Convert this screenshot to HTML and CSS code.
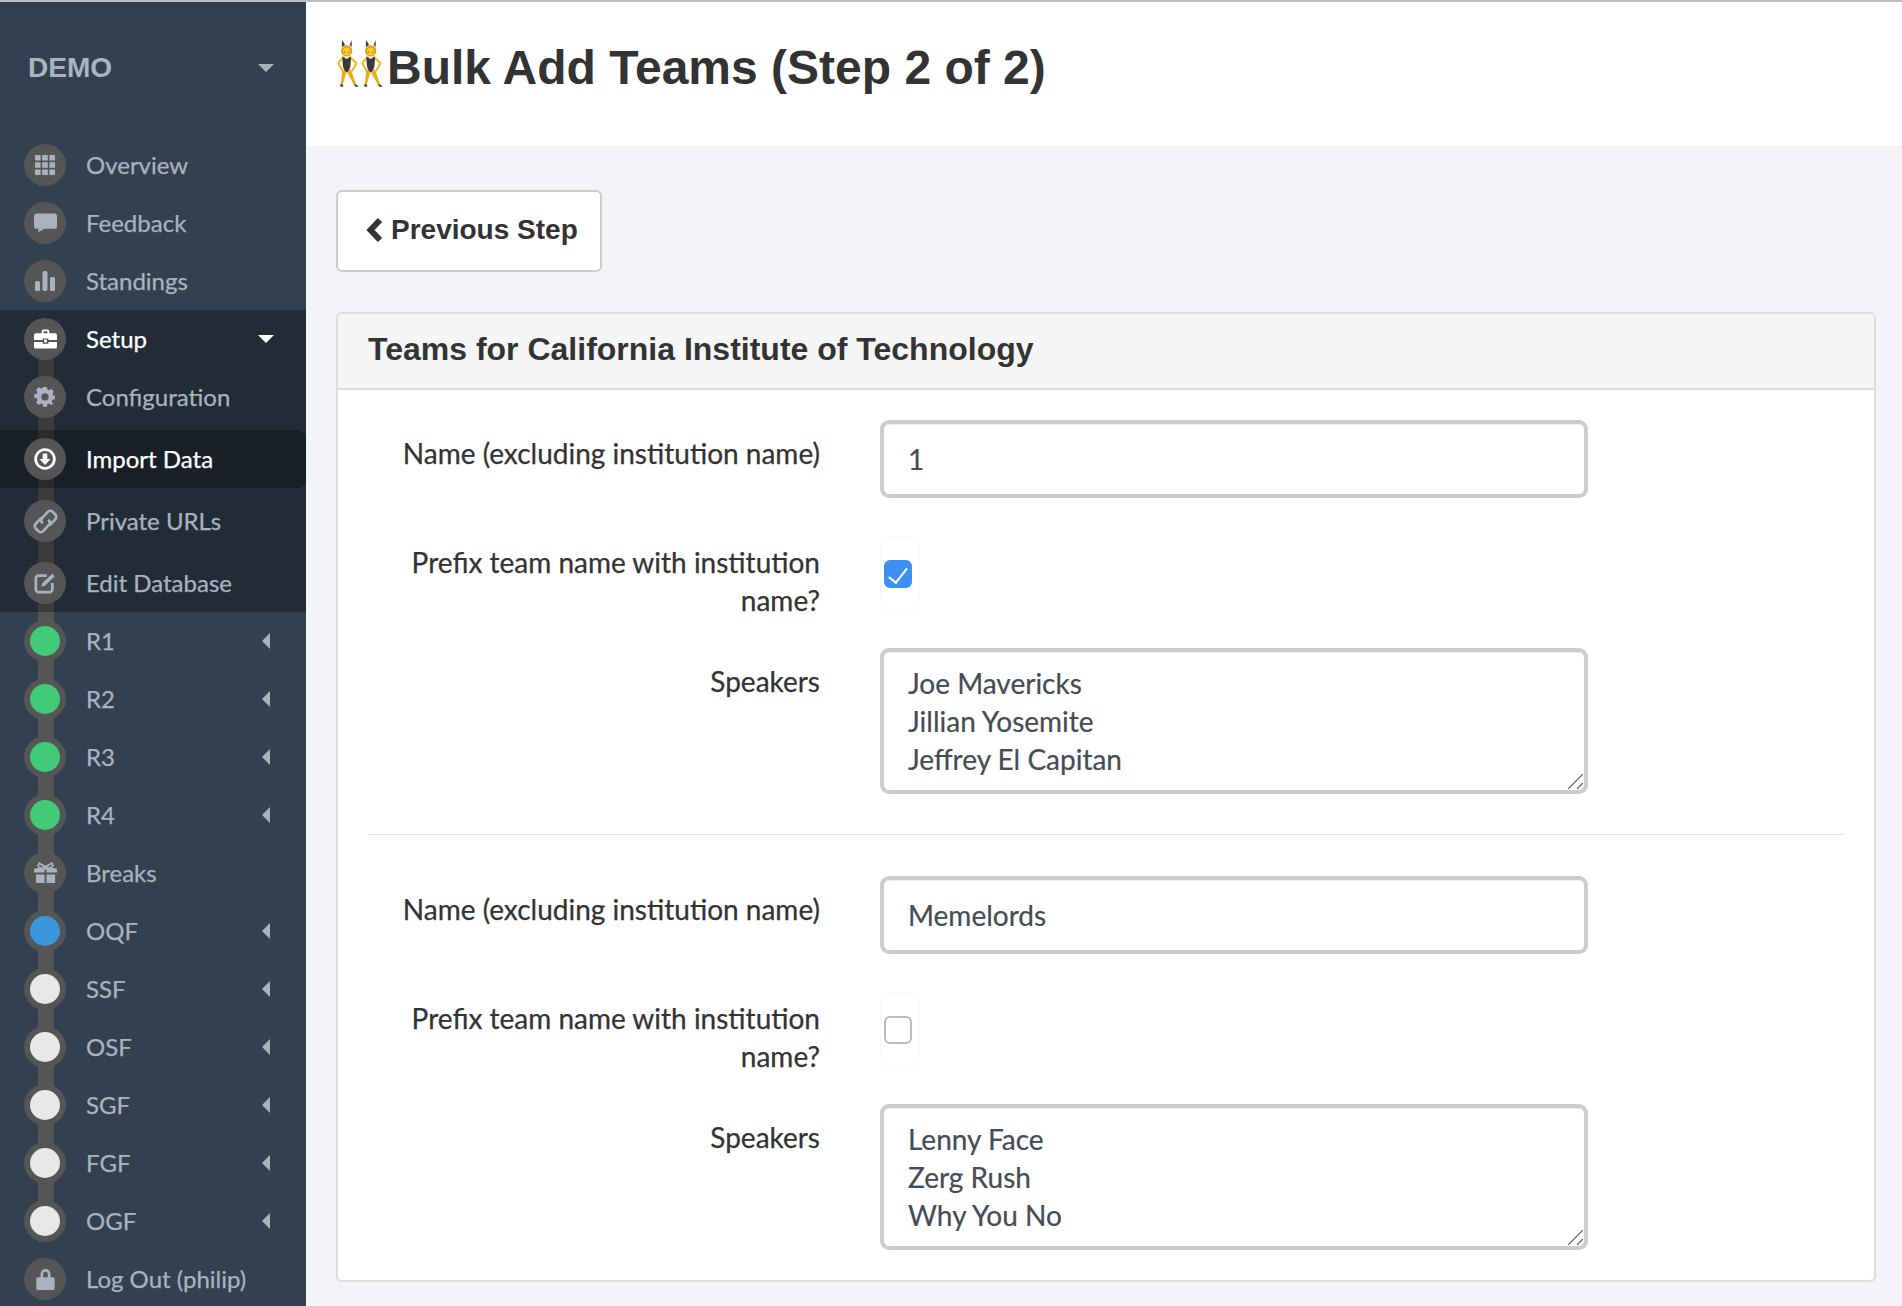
FILE: index.html
```html
<!DOCTYPE html>
<html lang="en">
<head>
<meta charset="utf-8">
<title>Bulk Add Teams (Step 2 of 2)</title>
<link rel="stylesheet" href="styles.css">
</head>
<body>
<svg class="defs" width="0" height="0" aria-hidden="true">
  <symbol id="bunny" viewBox="0 0 66 142">
    <path d="M14 22 L15 0 L24 14 Z M38 14 L44 0 L44 22 Z" fill="#3c3a38"/>
    <g fill="none" stroke="#f2b91e" stroke-linecap="round" stroke-linejoin="round" stroke-width="6">
      <path d="M18 53 L4 70 L16 92"/>
      <path d="M40 53 L59 70 L46 92"/>
    </g>
    <path d="M16 88 L29 94 L17 136 L11 136 Z M28 94 L42 88 L58 136 L51 136 Z" fill="#edb018"/>
    <path d="M8 134 L18 134 L19 141 L11 142 Z M50 134 L58 134 L66 141 L56 142 Z" fill="#555"/>
    <circle cx="29" cy="33" r="17" fill="#e39a16"/>
    <ellipse cx="29" cy="35" rx="11" ry="12" fill="#fbc92b"/>
    <path d="M22 37h3M33 37h3" stroke="#6b4a12" stroke-width="2.500"/>
    <path d="M15 48 L18 60 L24 54 Z M43 48 L40 60 L34 54 Z" fill="#e39a16"/>
    <path d="M16 52 L22 52 C25 58 33 58 36 52 L42 52 L41 72 C41 84 36 94 29 98 C22 94 17 84 17 72 Z" fill="#3a3a3c"/>
  </symbol>
  <symbol id="i-grid" viewBox="0 0 20 20"><path fill="currentColor" d="M0 0h5.600v5.600H0zM7.200 0h5.600v5.600H7.200zM14.400 0H20v5.600h-5.600zM0 7.200h5.600v5.600H0zM7.200 7.200h5.600v5.600H7.200zM14.400 7.200H20v5.600h-5.600zM0 14.400h5.600V20H0zM7.200 14.400h5.600V20H7.200zM14.400 14.400H20V20h-5.600z"/></symbol>
  <symbol id="i-comment" viewBox="0 0 24 20"><path fill="currentColor" d="M3 0h18a3 3 0 0 1 3 3v10a3 3 0 0 1-3 3H11l-7 4 1-4H3a3 3 0 0 1-3-3V3a3 3 0 0 1 3-3z"/></symbol>
  <symbol id="i-bars" viewBox="0 0 20 20"><rect fill="currentColor" x="0" y="10" width="5" height="10" rx="1.500"/><rect fill="currentColor" x="7.500" y="0" width="5" height="20" rx="2"/><rect fill="currentColor" x="15" y="6" width="5" height="14" rx="1.500"/></symbol>
  <symbol id="i-case" viewBox="0 0 24 20"><path fill="currentColor" d="M8 4V2a2 2 0 0 1 2-2h4a2 2 0 0 1 2 2v2h6a2 2 0 0 1 2 2v5h-9V9.500h-6V11H0V6a2 2 0 0 1 2-2h6zm2 0h4V2h-4v2zM0 13h9v2h6v-2h9v5a2 2 0 0 1-2 2H2a2 2 0 0 1-2-2v-5z"/><rect fill="currentColor" x="10.500" y="10.500" width="3" height="3"/></symbol>
  <symbol id="i-gear" viewBox="0 0 20 20"><path fill="currentColor" fill-rule="evenodd" d="M8 0h4l.6 2.800 1.800.8L17 2l2.800 2.900-1.600 2.500.8 1.800 2 .4v4l-2.800.6-.8 1.800 1.600 2.500L16.900 20l-2.500-1.600-1.800.8L12 22H8l-.6-2.800-1.800-.8L3.100 20 .2 17.100l1.600-2.500-.8-1.800L-2 12V8l2.800-.6.8-1.800L.2 3.100 3.100.2l2.500 1.600 1.800-.8zM10 7a4 4 0 1 0 0 8 4 4 0 0 0 0-8z" transform="translate(1.800 0.900) scale(.82)"/></symbol>
  <symbol id="i-down" viewBox="0 0 24 24"><circle cx="12" cy="12" r="10.200" fill="none" stroke="currentColor" stroke-width="3"/><path fill="currentColor" d="M9.500 6h5v6h3.500l-6 6.500L6 12h3.500z"/></symbol>
  <symbol id="i-link" viewBox="0 0 24 24"><g fill="none" stroke="currentColor" stroke-width="2.300" stroke-linecap="round" stroke-linejoin="round"><path d="M9 13a3 3 0 0 1 0-4L14 3.500a3 3 0 0 1 4.200-.2l2.500 2.500a3 3 0 0 1 0 4.200L16 15"/><path d="M15 11a3 3 0 0 1 0 4L10 20.500a3 3 0 0 1-4.200.2l-2.500-2.500a3 3 0 0 1 0-4.200L8 9"/></g></symbol>
  <symbol id="i-edit" viewBox="0 0 24 24"><path fill="none" stroke="currentColor" stroke-width="3" stroke-linejoin="round" d="M14 4H5a3 3 0 0 0-3 3v12a3 3 0 0 0 3 3h12a3 3 0 0 0 3-3v-7"/><path fill="currentColor" d="M20 2l2.500 2.500L12 15l-4 1 1-4z"/></symbol>
  <symbol id="i-gift" viewBox="0 0 24 24"><path fill="currentColor" d="M0 7l5-1-2-2 2-4 7 4 7-4 2 4-2 2 5 1v4H13V8h-2v3H0zM6 2.500L5 4l2 1.500h3zM18 2.500L14 5.500h3L19 4zM2 13h9v9H2zM13 13h9v9h-9z"/></symbol>
  <symbol id="i-lock" viewBox="0 0 20 24"><path fill="currentColor" d="M4.500 10V6.500a5.500 5.500 0 0 1 11 0V10H18a2 2 0 0 1 2 2v10a2 2 0 0 1-2 2H2a2 2 0 0 1-2-2V12a2 2 0 0 1 2-2h2.500zm3 0h5V6.500a2.500 2.500 0 0 0-5 0V10z"/></symbol>
  <symbol id="i-grip" viewBox="0 0 15 15"><path d="M0 15L15 0M9 15l6-6" fill="none" stroke="#555" stroke-width="1.100"/></symbol>
</svg>
<div class="app">
  <aside class="sidebar">
    <div class="brand"><span class="brand-name">DEMO</span><span class="caret-down"></span></div>
    <nav class="nav">
      <div class="nav-line"></div>
      <a class="row"><span class="dot"><svg class="ic ic-20"><use href="#i-grid"/></svg></span><span class="label">Overview</span></a>
      <a class="row"><span class="dot"><svg class="ic ic-comment"><use href="#i-comment"/></svg></span><span class="label">Feedback</span></a>
      <a class="row"><span class="dot"><svg class="ic ic-20"><use href="#i-bars"/></svg></span><span class="label">Standings</span></a>
      <div class="group">
        <a class="row open"><span class="dot"><svg class="ic ic-comment"><use href="#i-case"/></svg></span><span class="label">Setup</span><span class="caret-down"></span></a>
        <a class="row"><span class="dot"><svg class="ic ic-22"><use href="#i-gear"/></svg></span><span class="label">Configuration</span></a>
        <a class="row sub active"><span class="dot"><svg class="ic ic-22"><use href="#i-down"/></svg></span><span class="label">Import Data</span></a>
        <a class="row sub"><span class="dot"><svg class="ic ic-link"><use href="#i-link"/></svg></span><span class="label">Private URLs</span></a>
        <a class="row sub"><span class="dot"><svg class="ic ic-22"><use href="#i-edit"/></svg></span><span class="label">Edit Database</span></a>
      </div>
      <a class="row"><span class="dot"><span class="status done"></span></span><span class="label">R1</span><span class="caret-left"></span></a>
      <a class="row"><span class="dot"><span class="status done"></span></span><span class="label">R2</span><span class="caret-left"></span></a>
      <a class="row"><span class="dot"><span class="status done"></span></span><span class="label">R3</span><span class="caret-left"></span></a>
      <a class="row"><span class="dot"><span class="status done"></span></span><span class="label">R4</span><span class="caret-left"></span></a>
      <a class="row"><span class="dot"><svg class="ic ic-gift"><use href="#i-gift"/></svg></span><span class="label">Breaks</span></a>
      <a class="row"><span class="dot"><span class="status current"></span></span><span class="label">OQF</span><span class="caret-left"></span></a>
      <a class="row"><span class="dot"><span class="status todo"></span></span><span class="label">SSF</span><span class="caret-left"></span></a>
      <a class="row"><span class="dot"><span class="status todo"></span></span><span class="label">OSF</span><span class="caret-left"></span></a>
      <a class="row"><span class="dot"><span class="status todo"></span></span><span class="label">SGF</span><span class="caret-left"></span></a>
      <a class="row"><span class="dot"><span class="status todo"></span></span><span class="label">FGF</span><span class="caret-left"></span></a>
      <a class="row"><span class="dot"><span class="status todo"></span></span><span class="label">OGF</span><span class="caret-left"></span></a>
      <a class="row"><span class="dot"><svg class="ic ic-lock"><use href="#i-lock"/></svg></span><span class="label">Log Out (philip)</span></a>
    </nav>
  </aside>
  <main class="main">
    <header class="page-head">
      <svg class="bunny"><use href="#bunny"/></svg><svg class="bunny"><use href="#bunny"/></svg>
      <h1 class="title">Bulk Add Teams (Step 2 of 2)</h1>
    </header>
    <div class="content">
      <a class="btn"><svg class="chev" viewBox="0 0 18 26"><path d="M14 3L4.500 13 14 23" fill="none" stroke="currentColor" stroke-width="6"/></svg>Previous Step</a>
      <section class="panel">
        <h2 class="panel-head">Teams for California Institute of Technology</h2>
        <div class="panel-body">
          <div class="team">
            <label class="f-label">Name (excluding institution name)</label>
            <input class="control" type="text" value="1">
            <label class="f-label f-label-check">Prefix team name with institution name?</label>
            <span class="check-wrap"><input class="check" type="checkbox" checked></span>
            <label class="f-label">Speakers</label>
            <span class="area-wrap"><textarea class="control area">Joe Mavericks
Jillian Yosemite
Jeffrey El Capitan</textarea><svg class="grip"><use href="#i-grip"/></svg></span>
          </div>
          <hr class="divider">
          <div class="team">
            <label class="f-label">Name (excluding institution name)</label>
            <input class="control" type="text" value="Memelords">
            <label class="f-label f-label-check">Prefix team name with institution name?</label>
            <span class="check-wrap"><input class="check" type="checkbox"></span>
            <label class="f-label">Speakers</label>
            <span class="area-wrap"><textarea class="control area">Lenny Face
Zerg Rush
Why You No</textarea><svg class="grip"><use href="#i-grip"/></svg></span>
          </div>
        </div>
      </section>
    </div>
  </main>
</div>
</body>
</html>
```
FILE: styles.css
```css
* { box-sizing: border-box; }
html, body { margin: 0; height: 100%; }
body {
  overflow: hidden;
  border-top: 2px solid #bdbdbd;
  background: #f3f4f8;
  font-family: "Lato", "Liberation Sans", sans-serif;
  color: #333;
}
.defs { position: absolute; }
.app { display: flex; height: 1304px; overflow: hidden; }

/* sidebar */
.sidebar { flex: 0 0 306px; background: #324050; color: #a9b3bf; }
.brand {
  height: 134px;
  display: flex;
  align-items: center;
  justify-content: space-between;
  padding: 0 32px 2px 28px;
}
.brand-name { font: bold 28px "Liberation Sans", sans-serif; color: #a9b4c0; }
.nav { position: relative; }
.nav-line {
  position: absolute;
  left: 38px;
  top: 203px;
  width: 16px;
  height: 882px;
  background: #555;
}
.group {
  position: relative;
  z-index: 1;
  background: rgba(0, 0, 0, .3);
}
.row {
  position: relative;
  z-index: 1;
  display: flex;
  align-items: center;
  height: 58px;
  padding: 0 32px 0 24px;
  font-size: 24px;
}
.sub { margin-top: 4px; }
.active {
  background: rgba(0, 0, 0, .28);
  border-radius: 0 8px 8px 0;
  color: #fff;
}
.open { color: #fff; }
.dot {
  flex: none;
  width: 42px;
  height: 42px;
  border-radius: 50%;
  background: #555;
  display: flex;
  align-items: center;
  justify-content: center;
}
.label {
  flex: 1;
  margin-left: 20px;
  padding-bottom: 2px;
  white-space: nowrap;
  -webkit-text-stroke: .25px currentColor;
}
.status { width: 30px; height: 30px; border-radius: 50%; }
.done { background: #41cb78; }
.current { background: #3b97dc; }
.todo { background: #e8e8e8; }
.ic { display: block; }
.ic-20 { width: 20px; height: 20px; }
.ic-22 { width: 22px; height: 22px; }
.ic-link { width: 27px; height: 27px; }
.ic-comment { width: 23px; height: 20px; }
.ic-gift { width: 23px; height: 23px; }
.ic-lock { width: 19px; height: 22px; }
.caret-down {
  width: 0;
  height: 0;
  border-left: 8px solid transparent;
  border-right: 8px solid transparent;
  border-top: 8px solid currentColor;
}
.caret-left {
  width: 0;
  height: 0;
  margin-right: 4px;
  border-top: 8px solid transparent;
  border-bottom: 8px solid transparent;
  border-right: 8px solid currentColor;
}

/* main */
.main { flex: 1; min-width: 0; }
.page-head {
  height: 144px;
  background: #fff;
  display: flex;
  align-items: flex-start;
  padding: 38px 0 0 30px;
}
.bunny { width: 24px; height: 47px; flex: none; }
.title {
  margin: 0 0 0 3px;
  font: bold 48px/56px "Liberation Sans", sans-serif;
  color: #333;
}
.content { padding: 44px 26px 0 30px; }
.btn {
  display: inline-flex;
  align-items: center;
  height: 82px;
  width: 266px;
  padding: 0 0 2px 28px;
  background: #fff;
  border: 2px solid #ccc;
  border-radius: 6px;
  font: bold 28px "Liberation Sans", sans-serif;
  color: #333;
  vertical-align: top;
}
.chev { width: 18px; height: 26px; margin-right: 7px; }
.panel {
  margin-top: 40px;
  background: #fff;
  border: 2px solid #ddd;
  border-radius: 6px;
}
.panel-head {
  margin: 0;
  height: 76px;
  padding: 0 30px;
  background: #f5f5f5;
  border-bottom: 2px solid #ddd;
  border-radius: 4px 4px 0 0;
  font: bold 32px/70px "Liberation Sans", sans-serif;
  color: #333;
}
.panel-body { padding: 30px 30px 30px; }
.team {
  display: grid;
  grid-template-columns: 452px 708px;
  column-gap: 60px;
  row-gap: 38px;
}
.f-label {
  padding-top: 14px;
  text-align: right;
  font-size: 28px;
  line-height: 38px;
  color: #333;
  -webkit-text-stroke: .25px currentColor;
}
.f-label-check { padding-top: 7px; margin-bottom: -9px; }
.control {
  display: block;
  width: 708px;
  height: 78px;
  padding: 0 24px;
  background: #fff;
  border: 4px solid #ccc;
  border-radius: 9px;
  box-shadow: inset 0 1px 1px rgba(0, 0, 0, .075);
  font: 28px/38px "Lato", sans-serif;
  color: #444c55;
  outline: none;
  -webkit-text-stroke: .2px currentColor;
}
.area-wrap { position: relative; display: block; }
.area { height: 146px; padding: 12px 24px; resize: none; overflow: hidden; }
.grip {
  position: absolute;
  right: 5px;
  bottom: 5px;
  width: 15px;
  height: 15px;
}
.check-wrap {
  display: flex;
  align-items: center;
  width: 40px;
  height: 74px;
  padding: 2px 0 0 3px;
  border: 1px solid #f8f8f8;
  border-radius: 12px;
}
.check {
  appearance: none;
  position: relative;
  display: block;
  margin: 0;
  width: 28px;
  height: 28px;
  background: #fff;
  border: 2px solid #bbb;
  border-radius: 6px;
}
.check:checked { background: #3d8ff2; border-color: #3d8ff2; }
.check:checked::after {
  content: "";
  position: absolute;
  left: 7px;
  top: 2px;
  width: 8px;
  height: 17px;
  border: solid #fff;
  border-width: 0 2.5px 2.5px 0;
  transform: rotate(38deg);
}
.divider {
  margin: 40px 0 41px;
  height: 0;
  border: 0;
  border-top: 1px solid #e4e4e4;
}
```
